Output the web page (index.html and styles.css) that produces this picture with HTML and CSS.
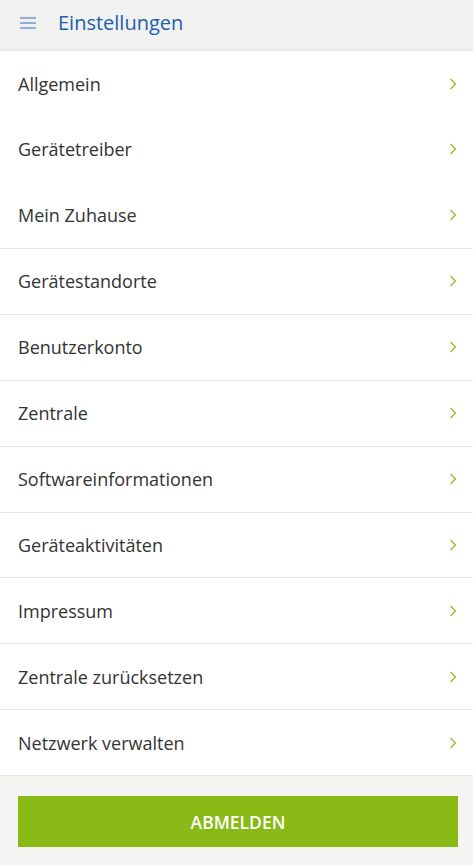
FILE: index.html
```html
<!DOCTYPE html>
<html>
<head>
  <link rel="stylesheet" href="styles.css">
</head>
<body>
  <div class="app">
    <div class="topbar">
      <svg class="menu-icon" width="16" height="12" viewBox="0 0 16 12">
        <path d="M0 1h16M0 6h16M0 11h16" stroke="#2f6fc4" stroke-width="1.1"/>
      </svg>
      <h1 class="title">Einstellungen</h1>
    </div>

    <div class="settings">
      <div class="group">
        <a class="item">Allgemein<svg class="chev" width="8" height="12" viewBox="0 0 8 12"><path d="M1.5 1l5 5-5 5" fill="none" stroke="#8cc023" stroke-width="1.3"/></svg></a>
        <a class="item">Gerätetreiber<svg class="chev" width="8" height="12" viewBox="0 0 8 12"><path d="M1.5 1l5 5-5 5" fill="none" stroke="#8cc023" stroke-width="1.3"/></svg></a>
        <a class="item">Mein Zuhause<svg class="chev" width="8" height="12" viewBox="0 0 8 12"><path d="M1.5 1l5 5-5 5" fill="none" stroke="#8cc023" stroke-width="1.3"/></svg></a>
      </div>
      <a class="item sep">Gerätestandorte<svg class="chev" width="8" height="12" viewBox="0 0 8 12"><path d="M1.5 1l5 5-5 5" fill="none" stroke="#8cc023" stroke-width="1.3"/></svg></a>
      <a class="item sep">Benutzerkonto<svg class="chev" width="8" height="12" viewBox="0 0 8 12"><path d="M1.5 1l5 5-5 5" fill="none" stroke="#8cc023" stroke-width="1.3"/></svg></a>
      <a class="item sep">Zentrale<svg class="chev" width="8" height="12" viewBox="0 0 8 12"><path d="M1.5 1l5 5-5 5" fill="none" stroke="#8cc023" stroke-width="1.3"/></svg></a>
      <a class="item sep">Softwareinformationen<svg class="chev" width="8" height="12" viewBox="0 0 8 12"><path d="M1.5 1l5 5-5 5" fill="none" stroke="#8cc023" stroke-width="1.3"/></svg></a>
      <a class="item sep">Geräteaktivitäten<svg class="chev" width="8" height="12" viewBox="0 0 8 12"><path d="M1.5 1l5 5-5 5" fill="none" stroke="#8cc023" stroke-width="1.3"/></svg></a>
      <a class="item sep">Impressum<svg class="chev" width="8" height="12" viewBox="0 0 8 12"><path d="M1.5 1l5 5-5 5" fill="none" stroke="#8cc023" stroke-width="1.3"/></svg></a>
      <a class="item sep">Zentrale zurücksetzen<svg class="chev" width="8" height="12" viewBox="0 0 8 12"><path d="M1.5 1l5 5-5 5" fill="none" stroke="#8cc023" stroke-width="1.3"/></svg></a>
      <a class="item sep">Netzwerk verwalten<svg class="chev" width="8" height="12" viewBox="0 0 8 12"><path d="M1.5 1l5 5-5 5" fill="none" stroke="#8cc023" stroke-width="1.3"/></svg></a>
    </div>

    <div class="footer">
      <button class="logout">ABMELDEN</button>
    </div>
  </div>
</body>
</html>
```

FILE: styles.css
```css
body {
  margin: 0;
  font-family: "Open Sans", "Noto Sans", Arial, sans-serif;
  background-color: #f5f5f3;
}
.app {
  width: 473px;
}
.topbar {
  display: flex;
  align-items: center;
  height: 51px;
  box-sizing: border-box;
  padding: 0 0 6px 20px;
  background-color: #f1f1f0;
  border-bottom: 1px solid #e3e3e3;
}
.menu-icon {
  display: block;
  margin-top: 2px;
}
.title {
  margin: 0 0 0 22px;
  font-size: 20px;
  font-weight: 400;
  color: #1b5fad;
}
.settings {
  background-color: #fff;
}
.item {
  display: flex;
  align-items: center;
  justify-content: space-between;
  height: 65.67px;
  box-sizing: border-box;
  padding: 0 16px 0 18px;
  font-size: 18px;
  color: #333;
}
.sep {
  height: 65.9px;
  border-top: 1px solid #e6e6e6;
}
.chev {
  display: block;
}
.footer {
  border-top: 1px solid #e3e3e3;
  padding: 20px 15px 0 18px;
  height: 89px;
  box-sizing: border-box;
}
.logout {
  display: block;
  width: 440px;
  height: 51px;
  border: none;
  background-color: #88b914;
  color: #fff;
  font-family: inherit;
  font-size: 17.5px;
  font-weight: 600;
}
```
